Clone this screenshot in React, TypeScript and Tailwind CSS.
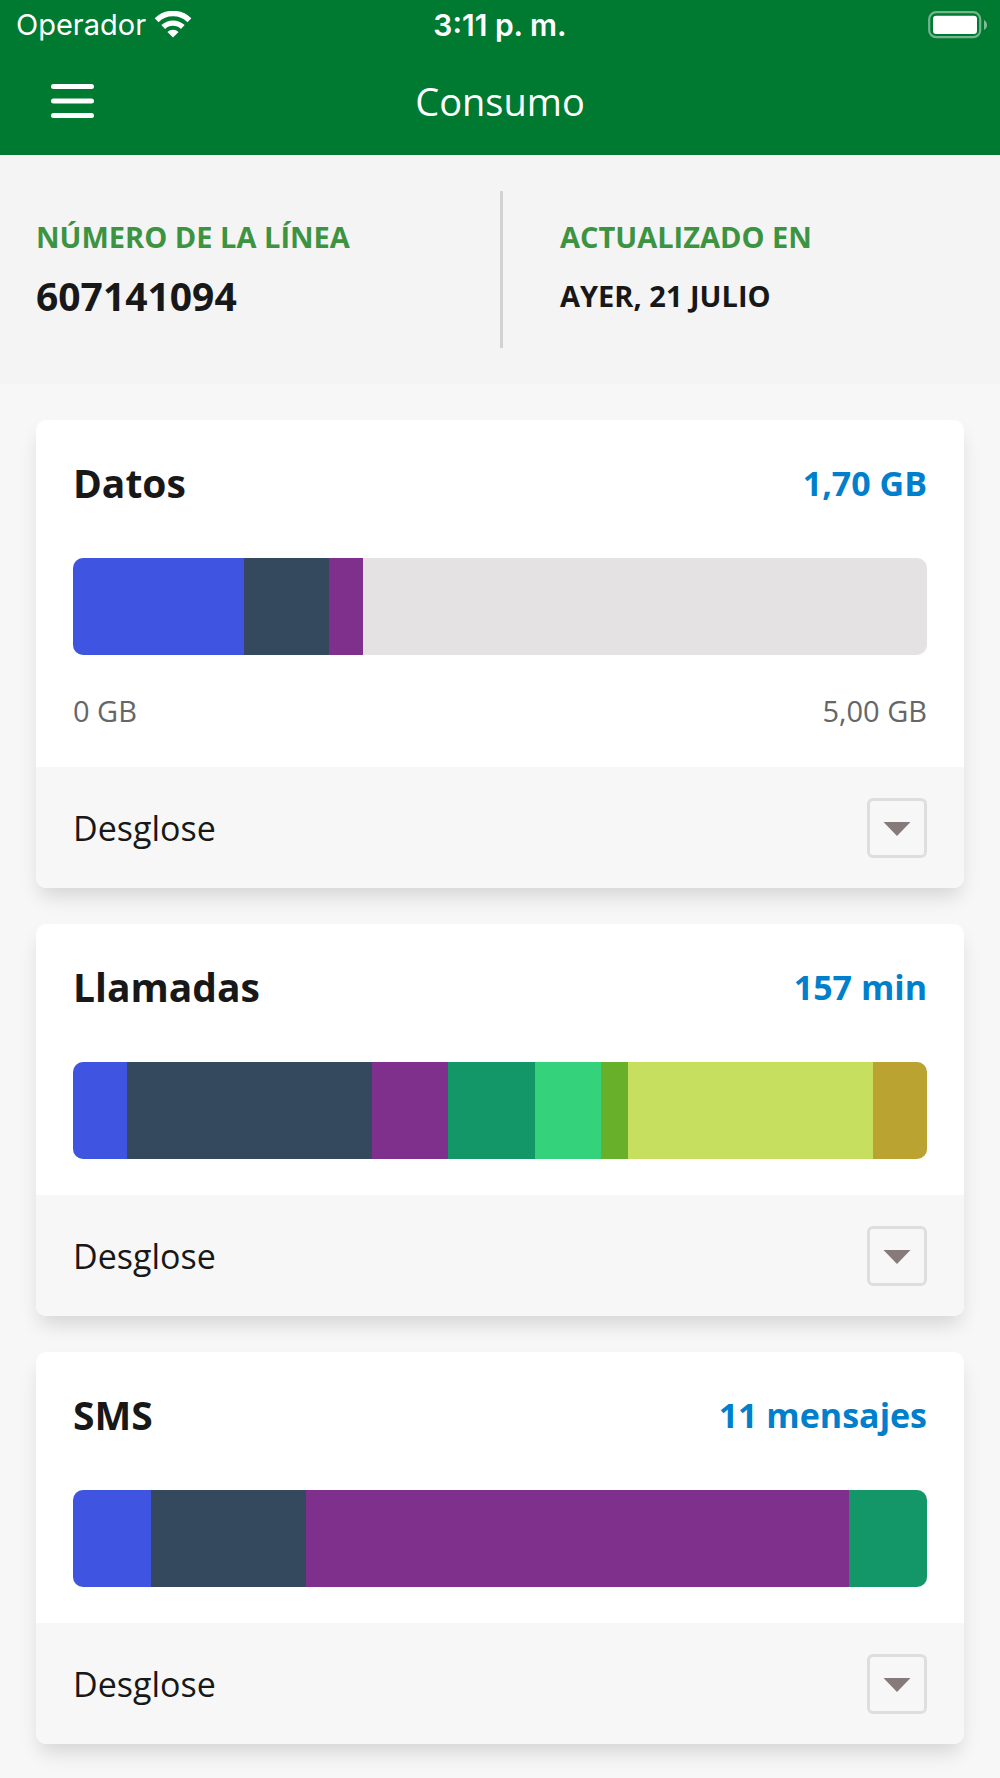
import { useState } from 'react';

type Segment = { value: number; color: string };

type Usage = {
  id: string;
  title: string;
  total: string;
  max: number;
  segments: Segment[];
  range?: [string, string];
};

const usages: Usage[] = [
  {
    id: 'datos',
    title: 'Datos',
    total: '1,70 GB',
    max: 5,
    range: ['0 GB', '5,00 GB'],
    segments: [
      { value: 1, color: 'bg-[#4054e2]' },
      { value: 0.5, color: 'bg-[#34495e]' },
      { value: 0.2, color: 'bg-[#7f308c]' },
    ],
  },
  {
    id: 'llamadas',
    title: 'Llamadas',
    total: '157 min',
    max: 157,
    segments: [
      { value: 10, color: 'bg-[#4054e2]' },
      { value: 45, color: 'bg-[#34495e]' },
      { value: 14, color: 'bg-[#7f308c]' },
      { value: 16, color: 'bg-[#149768]' },
      { value: 12, color: 'bg-[#34d27b]' },
      { value: 5, color: 'bg-[#68b02a]' },
      { value: 45, color: 'bg-[#c6df5e]' },
      { value: 10, color: 'bg-[#bba331]' },
    ],
  },
  {
    id: 'sms',
    title: 'SMS',
    total: '11 mensajes',
    max: 11,
    segments: [
      { value: 1, color: 'bg-[#4054e2]' },
      { value: 2, color: 'bg-[#34495e]' },
      { value: 7, color: 'bg-[#7f308c]' },
      { value: 1, color: 'bg-[#149768]' },
    ],
  },
];

function WifiIcon() {
  return (
    <svg width="38" height="28" viewBox="0 0 38 28" fill="none" stroke="white" aria-hidden="true">
      <path d="M2.6 9.2a23.6 23.6 0 0 1 32.8 0" strokeWidth="5.6" />
      <path d="M9.2 16a14.2 14.2 0 0 1 19.6 0" strokeWidth="5.4" />
      <path d="M19 26.6l-5.6-5.6a8 8 0 0 1 11.2 0z" fill="white" stroke="none" />
    </svg>
  );
}

function BatteryIcon() {
  return (
    <svg width="60" height="28" viewBox="0 0 60 28" aria-hidden="true">
      <rect x="1.2" y="1.2" width="51" height="25" rx="7" fill="none" stroke="white" strokeOpacity="0.45" strokeWidth="2.2" />
      <rect x="5" y="4.7" width="44" height="18.3" rx="3.2" fill="white" />
      <path d="M56 9c4 2 4 8 0 10z" fill="white" fillOpacity="0.5" />
    </svg>
  );
}

function StatusBar() {
  return (
    <div className="grid grid-cols-3 items-center h-[50px] px-3 font-['Inter',sans-serif] text-[29px] leading-9">
      <div className="flex items-center gap-2 pl-1">
        <span>Operador</span>
        <WifiIcon />
      </div>
      <span className="text-center text-[30px] font-semibold">3:11 p. m.</span>
      <div className="flex justify-end">
        <BatteryIcon />
      </div>
    </div>
  );
}

function Header() {
  return (
    <header className="bg-[#007931] text-white">
      <StatusBar />
      <div className="grid grid-cols-3 items-center h-[105px] px-9 pb-1">
        <button type="button" aria-label="Menú" className="w-18 h-18 flex items-center justify-center">
          <svg width="44" height="36" viewBox="0 0 44 36" stroke="white" strokeWidth="5" strokeLinecap="round" aria-hidden="true">
            <path d="M3.5 3.5h38M3.5 18h38M3.5 32.5h38" />
          </svg>
        </button>
        <h1 className="text-center text-[38px] leading-14 font-normal">Consumo</h1>
      </div>
    </header>
  );
}

function LineInfo() {
  return (
    <section className="bg-[#f4f4f4] p-9 grid grid-cols-2 font-bold text-[#181818]">
      <div className="h-[157px] flex flex-col justify-center gap-3">
        <p className="text-[29px] leading-10 text-[#3c9342]">NÚMERO DE LA LÍNEA</p>
        <p className="text-[39px] leading-[54px]">607141094</p>
      </div>
      <div className="h-[157px] flex flex-col justify-center gap-3 pl-[57px] border-l-3 border-[#d2d2d2]">
        <p className="text-[29px] leading-10 text-[#3c9342]">ACTUALIZADO EN</p>
        <p className="text-[29px] leading-[54px]">AYER, 21 JULIO</p>
      </div>
    </section>
  );
}

function UsageCard({ usage }: { usage: Usage }) {
  const [open, setOpen] = useState(false);

  return (
    <article className="bg-white rounded-[10px] overflow-hidden shadow-[0_12px_20px_-4px_rgba(0,0,0,0.14)]">
      <div className="px-[37px] py-9">
        <div className="flex items-center justify-between mb-12 font-bold">
          <h2 className="text-[39px] leading-[54px] text-[#181818]">{usage.title}</h2>
          <span className="text-[34px] leading-[54px] text-[#0080cc]">{usage.total}</span>
        </div>
        <div className="flex h-[97px] rounded-[10px] overflow-hidden bg-[#e4e2e3]">
          {usage.segments.map((s, i) => (
            <div key={i} className={s.color} style={{ width: `${(s.value / usage.max) * 100}%` }} />
          ))}
        </div>
        {usage.range && (
          <div className="flex justify-between mt-9 text-[29px] leading-10 text-[#666666]">
            <span>{usage.range[0]}</span>
            <span>{usage.range[1]}</span>
          </div>
        )}
      </div>
      <div className="flex items-center justify-between h-[121px] px-[37px] bg-[#f7f7f7]">
        <span id={`${usage.id}-desglose`} className="text-[34px] leading-12 text-[#181818]">Desglose</span>
        <button
          type="button"
          aria-labelledby={`${usage.id}-desglose`}
          aria-expanded={open}
          onClick={() => setOpen(!open)}
          className="w-15 h-15 flex items-center justify-center rounded-md border-3 border-[#dedede]"
        >
          <svg width="28" height="16" viewBox="0 0 28 16" fill="#867b7a" className={open ? 'rotate-180' : ''} aria-hidden="true">
            <path d="M0.5 2h27L14 16z" />
          </svg>
        </button>
      </div>
      {open && (
        <ul className="px-[37px] py-6 flex flex-col gap-3 bg-[#f7f7f7]">
          {usage.segments.map((s, i) => (
            <li key={i} className="flex items-center gap-4 text-[29px] text-[#666666]">
              <span className={`w-6 h-6 rounded ${s.color}`} />
              {s.value}
            </li>
          ))}
        </ul>
      )}
    </article>
  );
}

export default function App() {
  return (
    <div className="min-h-screen bg-[#f7f7f7] font-['Open_Sans','Noto_Sans',sans-serif]">
      <Header />
      <LineInfo />
      <main className="p-9 flex flex-col gap-9">
        {usages.map(u => (
          <UsageCard key={u.id} usage={u} />
        ))}
      </main>
    </div>
  );
}
